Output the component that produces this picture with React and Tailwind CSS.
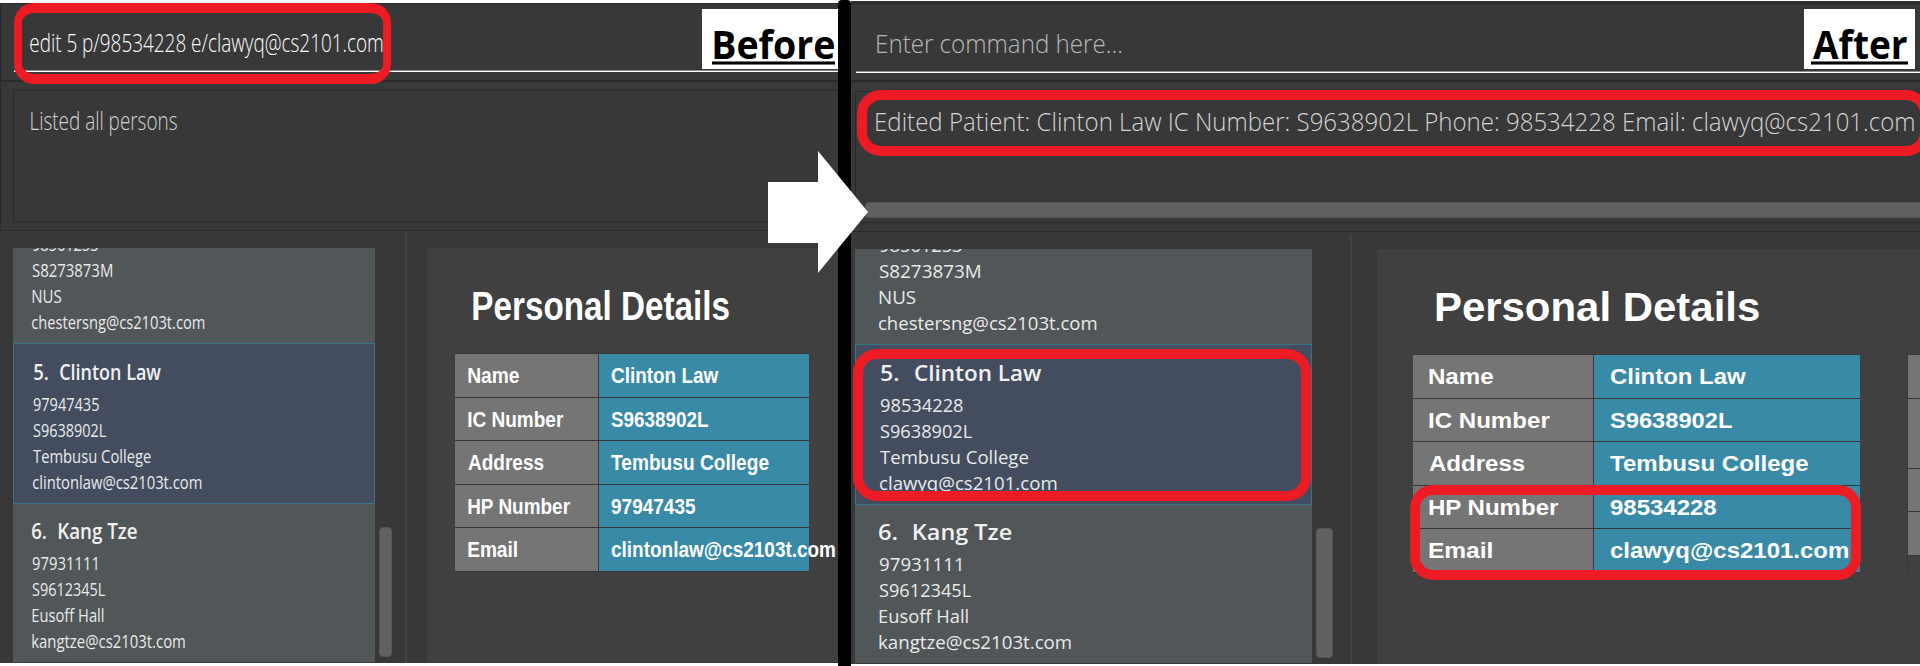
import { useLayoutEffect, useRef } from "react";

const SANS = "font-['Open_Sans','Noto_Sans',sans-serif]";
const ARIAL = "font-['Liberation_Sans',Arial,sans-serif] font-bold";

// Stretches a line of text so that its glyphs span exactly `w` pixels.
function Fit({ children, w, className = "" }) {
  const ref = useRef(null);
  useLayoutEffect(() => {
    const el = ref.current;
    const apply = () => {
      const cs = getComputedStyle(el);
      const ctx = document.createElement("canvas").getContext("2d");
      ctx.font = `${cs.fontWeight} ${cs.fontSize} ${cs.fontFamily}`;
      const m = ctx.measureText(children);
      const s = w / (m.actualBoundingBoxLeft + m.actualBoundingBoxRight);
      el.style.transform = `translateX(${m.actualBoundingBoxLeft * s}px) scaleX(${s})`;
    };
    apply();
    document.fonts.ready.then(apply);
  }, [children, w]);
  return (
    <span ref={ref} className={`block w-max origin-left whitespace-pre ${className}`}>
      {children}
    </span>
  );
}

function CommandBox({ text, w, className, label, labelW, labelClass }) {
  return (
    <div className="flex h-[67px] shrink-0 items-start justify-between border-b border-[#8d898d] shadow-[0_1px_0_#fff]">
      <Fit w={w} className={`${SANS} text-[25px] leading-[34px] font-light ${className}`}>
        {text}
      </Fit>
      <div className={`shrink-0 bg-white ${labelClass}`}>
        <Fit w={labelW} className={`${SANS} text-[40px] leading-[50px] font-bold text-black`}>
          {label}
        </Fit>
        <div className="-mx-0.5 -mt-[8px] h-1 border-y border-[#777] bg-black" />
      </div>
    </div>
  );
}

function Person({ title, lines, selected, pad }) {
  return (
    <div
      className={`shrink-0 ${pad} ${
        selected
          ? "h-[161px] border border-[#39738a] bg-[#434d5f] pt-[13px]"
          : "h-[159px] bg-[#515658] pt-[12px]"
      }`}
    >
      <div className="flex h-[34px]">
        {title.map(([t, w, cell]) => (
          <div key={t} className={cell}>
            <Fit w={w} className={`${SANS} text-[22px] leading-[28px] font-semibold text-[#f0f0f0]`}>
              {t}
            </Fit>
          </div>
        ))}
      </div>
      {lines.map(([t, w]) => (
        <Fit key={t} w={w} className={`${SANS} text-[18.5px] leading-[26px] text-[#e8eaea]`}>
          {t}
        </Fit>
      ))}
    </div>
  );
}

function Details({ title, titleW, titlePad, tableClass, rows, keyClass, valuePad }) {
  return (
    <>
      <div className={`h-[105px] pt-[35px] ${titlePad}`}>
        <Fit w={titleW} className={`${ARIAL} text-[40px] leading-[46px] text-white`}>
          {title}
        </Fit>
      </div>
      <div className={`flex flex-col border-t border-[#383838] ${tableClass}`}>
        {rows.map(([k, kw, v, vw]) => (
          <div key={k} className="flex h-[43.55px] border-b border-[#383838]">
            <div className={`shrink-0 border-r border-[#383838] bg-[#757575] pt-[7px] ${keyClass}`}>
              <Fit w={kw} className={`${ARIAL} text-[22.7px] leading-[28px] text-white`}>
                {k}
              </Fit>
            </div>
            <div className={`min-w-0 flex-1 bg-[#388aa6] pt-[7px] ${valuePad}`}>
              <Fit w={vw} className={`${ARIAL} text-[22.7px] leading-[28px] text-white`}>
                {v}
              </Fit>
            </div>
          </div>
        ))}
      </div>
    </>
  );
}

function Before() {
  return (
    <section className="flex w-[838px] shrink-0 flex-col overflow-hidden border-t-[3px] border-b-[3px] border-white bg-[#383838]">
      <div className="h-[77px] shrink-0 border-t border-l border-[#2b2b2b] pl-[13px]">
        <CommandBox
          text="edit 5 p/98534228 e/clawyq@cs2101.com"
          w={353}
          className="mt-[21px] ml-[15.5px] text-white"
          label="Before"
          labelW={120}
          labelClass="mt-[5px] h-[60px] w-[136px] pt-[10px] pr-[5px] pl-[12px]"
        />
      </div>
      <div className="h-[151px] shrink-0 border-t-2 border-b border-l border-[#2b2b2b] pt-2 pl-3">
        <div className="h-[132px] border border-r-0 border-[#2b2b2b] pt-[12px] pl-[16.5px]">
          <Fit w={146} className={`${SANS} text-[25px] leading-[34px] font-light text-[#d4d4d4]`}>
            Listed all persons
          </Fit>
        </div>
      </div>
      <div className="flex min-h-0 flex-1">
        <div className="mt-[17px] ml-[13px] flex h-[414px] w-[362px] shrink-0 flex-col overflow-hidden">
          <div className="flex h-[95px] shrink-0 flex-col justify-end bg-[#515658] pb-2 pl-[19px]">
            {[["98561253", 66], ["S8273873M", 80], ["NUS", 29.5], ["chestersng@cs2103t.com", 172.5]].map(([t, w]) => (
              <Fit key={t} w={w} className={`${SANS} text-[18.5px] leading-[26px] text-[#e8eaea]`}>
                {t}
              </Fit>
            ))}
          </div>
          <Person
            selected
            pad="pl-[19px]"
            title={[["5.", 14, "w-[27px] pl-px"], ["Clinton Law", 101, ""]]}
            lines={[["97947435", 66], ["S9638902L", 73.5], ["Tembusu College", 118], ["clintonlaw@cs2103t.com", 168.5]]}
          />
          <Person
            pad="pl-[19px]"
            title={[["6.", 14, "w-[27px]"], ["Kang Tze", 78, ""]]}
            lines={[["97931111", 65], ["S9612345L", 73.5], ["Eusoff Hall", 72], ["kangtze@cs2103t.com", 153]]}
          />
        </div>
        <div className="mt-[296px] ml-1 h-[130px] w-[13px] shrink-0 rounded border border-[#555] bg-[#616161]" />
        <div className="mt-[2px] ml-[13px] w-0.5 shrink-0 bg-[#434343]" />
        <div className="mt-[17px] mb-px ml-5 flex-1 bg-[#404040]">
          <Details
            title="Personal Details"
            titleW={256}
            titlePad="pl-[46px]"
            tableClass="ml-7 w-[354px]"
            keyClass="w-[144px] pl-[12.5px]"
            valuePad="pl-[12px]"
            rows={[
              ["Name", 51, "Clinton Law", 107.5],
              ["IC Number", 95.5, "S9638902L", 97.5],
              ["Address", 75.5, "Tembusu College", 157.5],
              ["HP Number", 102.5, "97947435", 84],
              ["Email", 49, "clintonlaw@cs2103t.com", 224],
            ]}
          />
        </div>
      </div>
    </section>
  );
}

function After() {
  return (
    <section className="flex w-[1069px] shrink-0 flex-col overflow-hidden border-t border-b-2 border-white bg-[#383838]">
      <div className="h-[79px] shrink-0 border-t-4 border-[#2d302d] pl-[5px]">
        <CommandBox
          text="Enter command here..."
          w={244}
          className="mt-[21px] ml-[20.5px] text-[#b8b8b8]"
          label="After"
          labelW={94.5}
          labelClass="mt-[4px] mr-[5px] h-[60px] w-[111px] px-[9px] pt-[10px]"
        />
      </div>
      <div className="h-[152px] shrink-0 border-t-2 border-b border-[#2b2b2b] pt-[9px] pl-1">
        <div className="flex h-[132px] flex-col justify-between border border-r-0 border-[#2b2b2b] pt-[12px] pb-1 pl-[9px]">
          <Fit w={1038.5} className={`${SANS} ml-[11px] text-[25px] leading-[34px] font-light text-[#d4d4d4]`}>
            Edited Patient: Clinton Law IC Number: S9638902L Phone: 98534228 Email: clawyq@cs2101.com
          </Fit>
          <div className="h-4 rounded-l border border-r-0 border-[#555] bg-[#616161]" />
        </div>
      </div>
      <div className="flex min-h-0 flex-1">
        <div className="mt-[17px] ml-1 flex h-[414px] w-[457px] shrink-0 flex-col overflow-hidden">
          <div className="flex h-[95px] shrink-0 flex-col justify-end bg-[#515658] pb-2 pl-[23.5px]">
            {[["98561253", 83], ["S8273873M", 101], ["NUS", 37], ["chestersng@cs2103t.com", 217.5]].map(([t, w]) => (
              <Fit key={t} w={w} className={`${SANS} text-[18.5px] leading-[26px] text-[#e8eaea]`}>
                {t}
              </Fit>
            ))}
          </div>
          <Person
            selected
            pad="pl-6"
            title={[["5.", 17.5, "w-[34.5px] pl-px"], ["Clinton Law", 126.5, ""]]}
            lines={[["98534228", 83], ["S9638902L", 92.5], ["Tembusu College", 148.5], ["clawyq@cs2101.com", 176.5]]}
          />
          <Person
            pad="pl-[23.5px]"
            title={[["6.", 18, "w-[35px]"], ["Kang Tze", 97.5, ""]]}
            lines={[["97931111", 82], ["S9612345L", 92.5], ["Eusoff Hall", 89.5], ["kangtze@cs2103t.com", 192]]}
          />
        </div>
        <div className="mt-[296px] ml-[4px] h-[130px] w-[17px] shrink-0 rounded border border-[#555] bg-[#616161]" />
        <div className="mt-[2px] ml-[17px] w-0.5 shrink-0 bg-[#434343]" />
        <div className="mt-[17px] ml-[25px] flex-1 overflow-hidden bg-[#404040]">
          <div className="flex">
            <div className="w-[530px] shrink-0">
              <Details
                title="Personal Details"
                titleW={323}
                titlePad="pl-[59px]"
                tableClass="ml-[36px] w-[447px]"
                keyClass="w-[181px] pl-[15.5px]"
                valuePad="pl-[15.5px]"
                rows={[
                  ["Name", 64, "Clinton Law", 136],
                  ["IC Number", 121, "S9638902L", 122.5],
                  ["Address", 95.5, "Tembusu College", 198],
                  ["HP Number", 130, "98534228", 106],
                  ["Email", 63, "clawyq@cs2101.com", 238],
                ]}
              />
            </div>
            <div className="mt-[105px] flex flex-1 flex-col border-t border-l border-[#383838]">
              <div className="h-[43.5px] border-b border-[#383838] bg-[#757575]" />
              <div className="h-[70px] border-b border-[#383838] bg-[#757575]" />
              <div className="h-[43.5px] border-b border-[#383838] bg-[#757575]" />
              <div className="h-[43.5px] border-b border-[#383838] bg-[#757575]" />
            </div>
          </div>
        </div>
      </div>
    </section>
  );
}

export default function App() {
  return (
    <main className="relative flex h-[666px] w-[1920px] overflow-hidden bg-white">
      <Before />
      <div className="w-[13px] shrink-0 rounded-t bg-black" />
      <After />
      <div className="absolute top-[3px] left-[14px] h-[81px] w-[377px] rounded-[20px] border-x-8 border-y-10 border-[#ed1c24]" />
      <div className="absolute top-[90px] left-[857px] h-[66px] w-[1073px] rounded-[24px] border-10 border-[#ed1c24]" />
      <div className="absolute top-[349px] left-[853px] h-[152px] w-[458px] rounded-[24px] border-10 border-[#ed1c24]" />
      <div className="absolute top-[485px] left-[1410px] h-[95px] w-[451px] rounded-[23px] border-10 border-[#ed1c24]" />
      <svg className="absolute top-[151px] left-[768px] h-[122px] w-[100px]" viewBox="0 0 100 122">
        <path d="M0 31H50V0L100 61L50 122V92H0Z" fill="#fff" />
      </svg>
    </main>
  );
}
